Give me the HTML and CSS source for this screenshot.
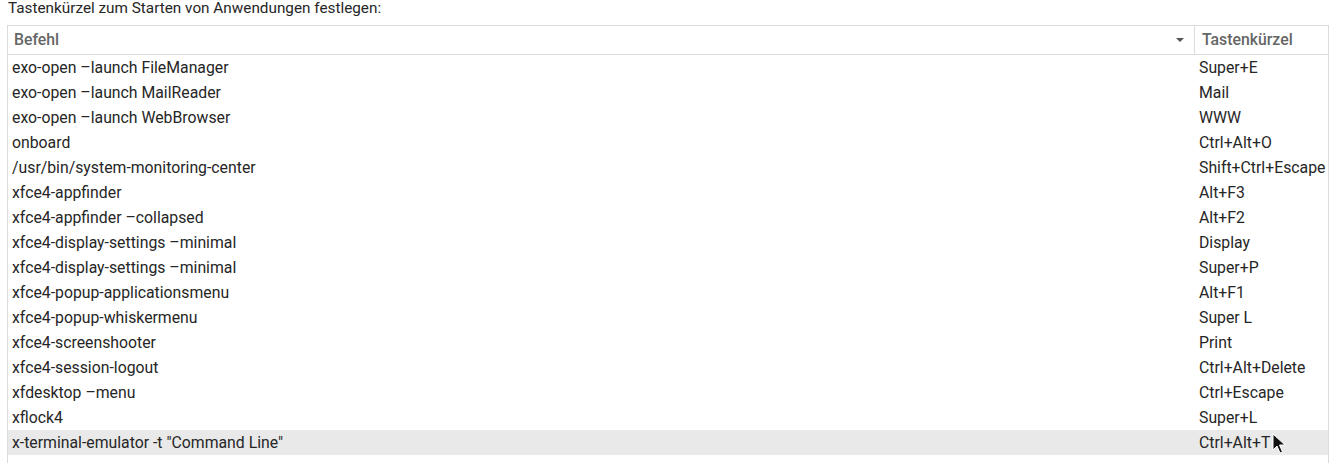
FILE: index.html
```html
<!DOCTYPE html>
<html lang="de">
<head>
<meta charset="utf-8">
<link rel="stylesheet" href="styles.css">
</head>
<body>
<div class="page">
  <div class="caption">Tastenkürzel zum Starten von Anwendungen festlegen:</div>
  <div class="frame">
    <div class="row head">
      <div class="c1">Befehl<span class="sort"></span></div>
      <div class="c2">Tastenkürzel</div>
    </div>
    <div class="row"><div class="c1">exo-open –launch FileManager</div><div class="c2">Super+E</div></div>
    <div class="row"><div class="c1">exo-open –launch MailReader</div><div class="c2">Mail</div></div>
    <div class="row"><div class="c1">exo-open –launch WebBrowser</div><div class="c2">WWW</div></div>
    <div class="row"><div class="c1">onboard</div><div class="c2">Ctrl+Alt+O</div></div>
    <div class="row"><div class="c1">/usr/bin/system-monitoring-center</div><div class="c2">Shift+Ctrl+Escape</div></div>
    <div class="row"><div class="c1">xfce4-appfinder</div><div class="c2">Alt+F3</div></div>
    <div class="row"><div class="c1">xfce4-appfinder –collapsed</div><div class="c2">Alt+F2</div></div>
    <div class="row"><div class="c1">xfce4-display-settings –minimal</div><div class="c2">Display</div></div>
    <div class="row"><div class="c1">xfce4-display-settings –minimal</div><div class="c2">Super+P</div></div>
    <div class="row"><div class="c1">xfce4-popup-applicationsmenu</div><div class="c2">Alt+F1</div></div>
    <div class="row"><div class="c1">xfce4-popup-whiskermenu</div><div class="c2">Super L</div></div>
    <div class="row"><div class="c1">xfce4-screenshooter</div><div class="c2">Print</div></div>
    <div class="row"><div class="c1">xfce4-session-logout</div><div class="c2">Ctrl+Alt+Delete</div></div>
    <div class="row"><div class="c1">xfdesktop –menu</div><div class="c2">Ctrl+Escape</div></div>
    <div class="row"><div class="c1">xflock4</div><div class="c2">Super+L</div></div>
    <div class="row hover"><div class="c1">x-terminal-emulator -t "Command Line"</div><div class="c2">Ctrl+Alt+T<svg class="cursor" width="14" height="22" viewBox="0 0 14 22"><path d="M1 1 L1 17 L5 13 L8 20 L10.5 19 L7.5 12 L13 12 Z" fill="#111" stroke="#fff" stroke-width="1"/></svg></div></div>
  </div>
</div>
</body>
</html>
```

FILE: styles.css
```css
*, *::before, *::after {
  box-sizing: border-box;
}
html, body {
  margin: 0;
  padding: 0;
  background: #ffffff;
}
body {
  font-family: Roboto, "Liberation Sans", sans-serif;
  color: #262626;
  font-size: 15.8px;
}
.page {
  padding: 0 3px 0 7px;
  height: 463px;
  overflow: hidden;
}
.caption {
  font-size: 15.3px;
  height: 25px;
  line-height: 17px;
  padding-left: 1px;
}
.frame {
  border: 1px solid #dcdcdc;
  border-bottom: none;
  height: 460px;
}
.row {
  display: flex;
  height: 25px;
  line-height: 25px;
}
.row.head {
  height: 29px;
  line-height: 28px;
  border-bottom: 1px solid #dcdcdc;
  color: #666666;
  font-weight: 500;
}
.row.hover {
  background: #e9e9e9;
}
.c1 {
  flex: 1;
  padding-left: 4px;
  position: relative;
  white-space: nowrap;
}
.c2 {
  width: 134px;
  padding-left: 5px;
  position: relative;
  white-space: nowrap;
}
.head .c1 {
  padding-left: 6px;
}
.head .c2 {
  border-left: 1px solid #dcdcdc;
  padding-left: 7px;
}
.sort {
  position: absolute;
  right: 10px;
  top: 12px;
  width: 0;
  height: 0;
  border-left: 4px solid transparent;
  border-right: 4px solid transparent;
  border-top: 4px solid #555;
}
.cursor {
  position: absolute;
  left: 78px;
  top: 3px;
}
```
